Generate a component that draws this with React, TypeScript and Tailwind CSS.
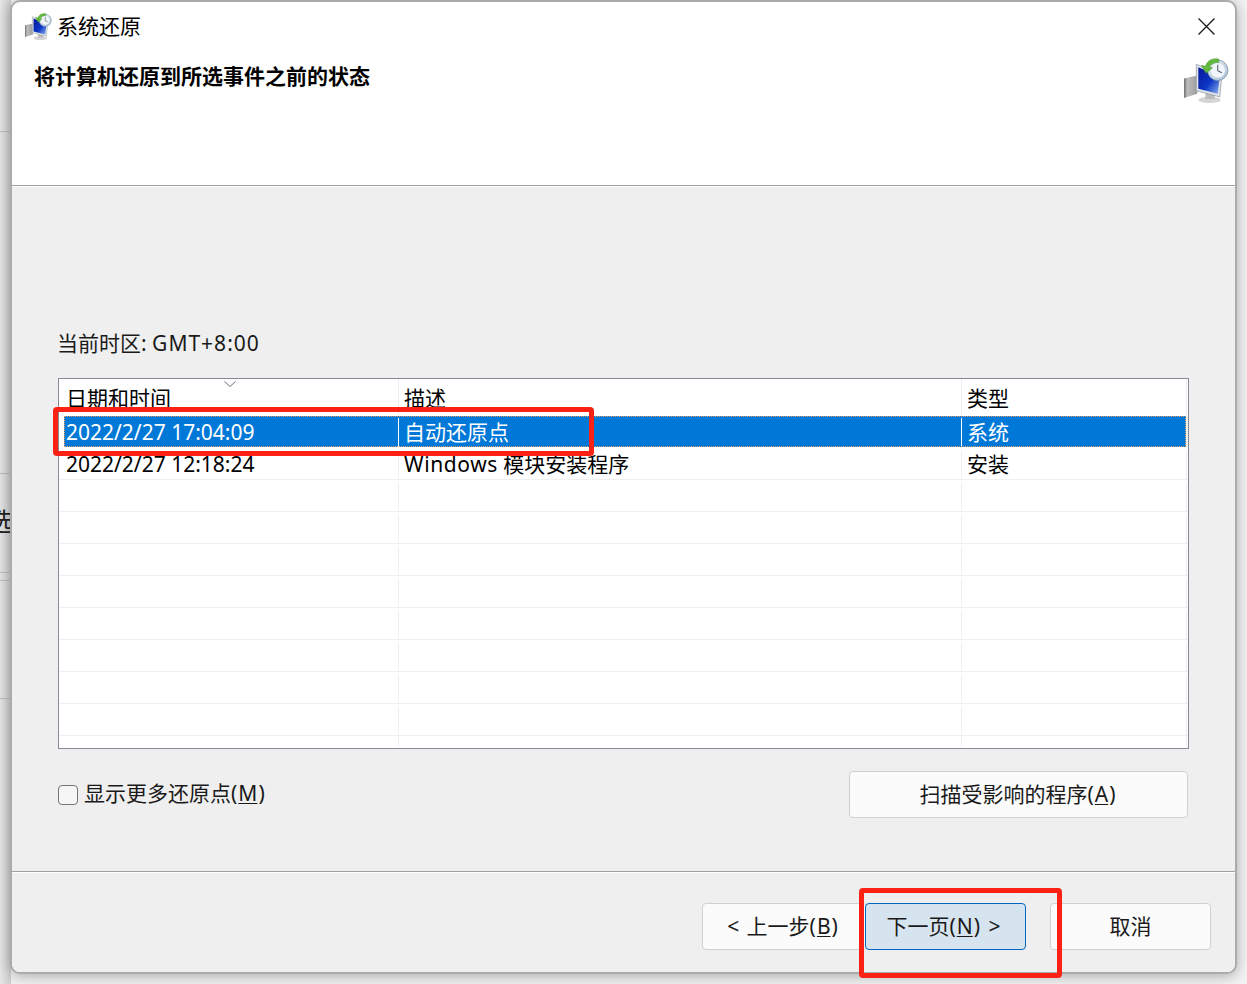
import type { ReactNode } from "react";

const FONT = "font-['Noto_Sans','Noto_Sans_CJK_SC',sans-serif]";

const EMPTY_ROWS = [0, 1, 2, 3, 4, 5, 6, 7];

function RestoreIcon({ className }: { className: string }) {
  return (
    <svg viewBox="0 0 44 44" className={className}>
      <defs>
        <linearGradient id="screen" x1="0" y1="0" x2="1" y2="1">
          <stop offset="0" stopColor="#08189a" />
          <stop offset="0.55" stopColor="#0c35c4" />
          <stop offset="1" stopColor="#8fb4ee" />
        </linearGradient>
        <linearGradient id="clock" x1="0" y1="0" x2="1" y2="1">
          <stop offset="0" stopColor="#eef3f8" />
          <stop offset="1" stopColor="#a4bdd6" />
        </linearGradient>
        <linearGradient id="tower" x1="0" y1="0" x2="1" y2="0">
          <stop offset="0" stopColor="#6f6f6f" />
          <stop offset="0.25" stopColor="#bdbdbd" />
          <stop offset="1" stopColor="#9c9c9c" />
        </linearGradient>
      </defs>
      <path d="M0 20 L13 17 L13 35 L0 39 Z" fill="url(#tower)" />
      <ellipse cx="25" cy="41" rx="11" ry="3" fill="#d4d4d4" />
      <path d="M21 34 L30 35 L30 40 L21 40 Z" fill="#bcbcbc" />
      <path d="M12 6 L37 17 L35 38 L12 32 Z" fill="#dfe4e9" stroke="#8f98a2" strokeWidth="0.7" />
      <path d="M14 9 L35 18 L33 35 L14 30 Z" fill="url(#screen)" />
      <circle cx="33" cy="12" r="10" fill="url(#clock)" stroke="#7f94a8" strokeWidth="0.8" />
      <circle cx="33" cy="12" r="7.5" fill="#f2f6fa" stroke="#b6c6d6" strokeWidth="0.5" />
      <path d="M33 6.5 V12.5 L37 14.5" fill="none" stroke="#4a5a6a" strokeWidth="1" />
      <path d="M34 1 C28 0 23 2 21 8 L17 7 L21.5 15 L28 9.5 L25 9 C26 6 30 4 34 4.5 Z" fill="#63b83e" stroke="#3f8f28" strokeWidth="0.4" />
    </svg>
  );
}

function Mnemonic({ children }: { children: string }) {
  return <span className="px-px underline underline-offset-2 decoration-1">{children}</span>;
}

function Row({ date, desc, type, selected }: { date?: string; desc?: ReactNode; type?: string; selected?: boolean }) {
  if (selected) {
    return (
      <div className="flex h-[32px] pl-[5px] border-b border-white">
        <div className="flex flex-1 bg-[#0078d7] pt-[2px] text-white outline-1 outline-dotted outline-[#d9a066] -outline-offset-1">
          <div className="w-[335px] pl-[2px] flex items-center border-r border-white">{date}</div>
          <div className="w-[563px] pl-[5px] flex items-center border-r border-white">{desc}</div>
          <div className="flex-1 pl-[5px] flex items-center">{type}</div>
        </div>
        <div className="w-[2px] bg-[#f0f0f0]" />
      </div>
    );
  }
  return (
    <div className="flex h-[32px] border-b border-[#f0f0f0] pt-[2px] text-black">
      <div className="w-[340px] pl-[7px] flex items-center border-r border-[#f0f0f0]">{date}</div>
      <div className="w-[563px] pl-[5px] flex items-center border-r border-[#f0f0f0]">{desc}</div>
      <div className="flex-1 pl-[5px] flex items-center border-r border-[#f0f0f0]">{type}</div>
      <div className="w-px" />
    </div>
  );
}

export default function App() {
  return (
    <div className={`${FONT} relative h-[984px] w-[1247px] overflow-hidden bg-[#f2f2f2] pl-[10px] pr-[10px] pb-[10px] text-[21px] leading-none text-black`}>
      {/* page behind the dialog */}
      <div className="absolute inset-y-0 left-0 w-[11px] bg-gradient-to-r from-[#e6e6e6] to-[#cfcfcf]" />
      <div className="absolute left-0 top-[131px] h-px w-[11px] bg-[#bdbdbd]" />
      <div className="absolute left-0 top-[473px] h-px w-[11px] bg-[#bdbdbd]" />
      <div className="absolute left-0 top-[572px] h-px w-[11px] bg-[#bdbdbd]" />
      <div className="absolute left-0 top-[580px] h-px w-[11px] bg-[#bdbdbd]" />
      <div className="absolute left-0 top-[698px] h-px w-[11px] bg-[#bdbdbd]" />
      <div className="absolute left-[-12px] top-[509px] text-[25px] text-[#222]">选</div>

      <div className="relative flex h-full flex-col overflow-hidden rounded-[10px] border-2 border-[#ababab] bg-white shadow-[0_2px_14px_rgba(0,0,0,0.3)]">
        <div className="relative h-[184px] shrink-0 border-b border-[#a0a0a0]">
          <div className="flex items-center pl-[13px] pt-[11px]">
            <RestoreIcon className="h-[27px] w-[27px]" />
            <span className="ml-[5px]">系统还原</span>
          </div>
          <div className="pl-[22px] pt-[26px] font-bold">将计算机还原到所选事件之前的状态</div>
          <svg viewBox="0 0 16 16" className="absolute right-[20px] top-[16px] h-[17px] w-[17px]">
            <path d="M0.5 0.5 L15.5 15.5 M15.5 0.5 L0.5 15.5" stroke="#1a1a1a" strokeWidth="1.2" />
          </svg>
          <RestoreIcon className="absolute right-[6px] top-[56px] h-[45px] w-[45px]" />
        </div>

        <div className="flex flex-1 flex-col border-t border-white bg-[#efefef] pl-[46px] pr-[46px] pb-[51px]">
          <div className="-ml-px mt-[146px] leading-[20px] text-[#1a1a1a]">
            当前时区: <span className="tracking-[1px]">GMT+8:00</span>
          </div>
          <div className="mt-[25px] h-[371px] border border-[#868a94] bg-white">
            <div className="relative flex h-[37px] text-black">
              <div className="w-[340px] pl-[7px] pt-[9px] border-r border-[#ededed]">日期和时间</div>
              <div className="w-[563px] pl-[5px] pt-[9px] border-r border-[#ededed]">描述</div>
              <div className="flex-1 pl-[5px] pt-[9px] border-r border-[#ededed]">类型</div>
              <div className="w-px" />
              <svg viewBox="0 0 12 6" className="absolute left-[165px] top-[2px] h-[6px] w-[12px]">
                <path d="M0.5 0.5 L6 5.5 L11.5 0.5" fill="none" stroke="#6d6d6d" strokeWidth="1" />
              </svg>
            </div>
            <Row selected date="2022/2/27 17:04:09" desc="自动还原点" type="系统" />
            <Row
              date="2022/2/27 12:18:24"
              desc={
                <span>
                  <span className="tracking-[0.6px]">Windows</span> 模块安装程序
                </span>
              }
              type="安装"
            />
            {EMPTY_ROWS.map((i) => (
              <Row key={i} />
            ))}
            <div className="flex h-[11px]">
              <div className="w-[340px] border-r border-[#f0f0f0]" />
              <div className="w-[563px] border-r border-[#f0f0f0]" />
              <div className="flex-1 border-r border-[#f0f0f0]" />
              <div className="w-px" />
            </div>
          </div>
          <div className="mt-[22px] flex items-center justify-between">
            <label className="-mt-[2px] flex items-center text-[#1a1a1a]">
              <span className="mt-[2px] h-[20px] w-[20px] rounded-[4px] border border-[#767676] bg-[#f6f6f6]" />
              <span className="ml-[6px]">显示更多还原点(<Mnemonic>M</Mnemonic>)</span>
            </label>
            <button className="mr-px h-[47px] w-[339px] rounded-[4px] border border-[#d0d0d0] bg-[#fbfbfb] pr-[2px] text-[#1a1a1a]">
              扫描受影响的程序(<Mnemonic>A</Mnemonic>)
            </button>
          </div>
        </div>

        <div className="flex h-[101px] shrink-0 justify-end border-t border-[#a0a0a0] bg-[#efefef] pr-[24px] pt-[31px] shadow-[inset_0_1px_0_#ffffff]">
          <div className="flex h-[47px]">
            <button className="w-[165px] rounded-[4px] border border-[#d0d0d0] bg-[#fbfbfb] pr-[4px] text-[#1a1a1a] [word-spacing:2px]">
              &lt; 上一步(<Mnemonic>B</Mnemonic>)
            </button>
            <button className="relative -ml-[2px] w-[161px] rounded-[4px] border border-[#0067c0] bg-[#d6e4f0] pr-[4px] text-[#1a1a1a] [word-spacing:3px]">
              下一页(<Mnemonic>N</Mnemonic>) &gt;
            </button>
            <button className="ml-[24px] w-[161px] rounded-[4px] border border-[#d0d0d0] bg-[#fbfbfb] text-[#1a1a1a]">
              取消
            </button>
          </div>
        </div>
      </div>

      {/* red annotations drawn over the screenshot */}
      <div className="absolute left-[53px] top-[407px] h-[49px] w-[541px] rounded-[4px] border-[5px] border-[#fb2114]" />
      <div className="absolute left-[859px] top-[888px] h-[90px] w-[203px] rounded-[4px] border-[5px] border-[#fb2114]" />
    </div>
  );
}
